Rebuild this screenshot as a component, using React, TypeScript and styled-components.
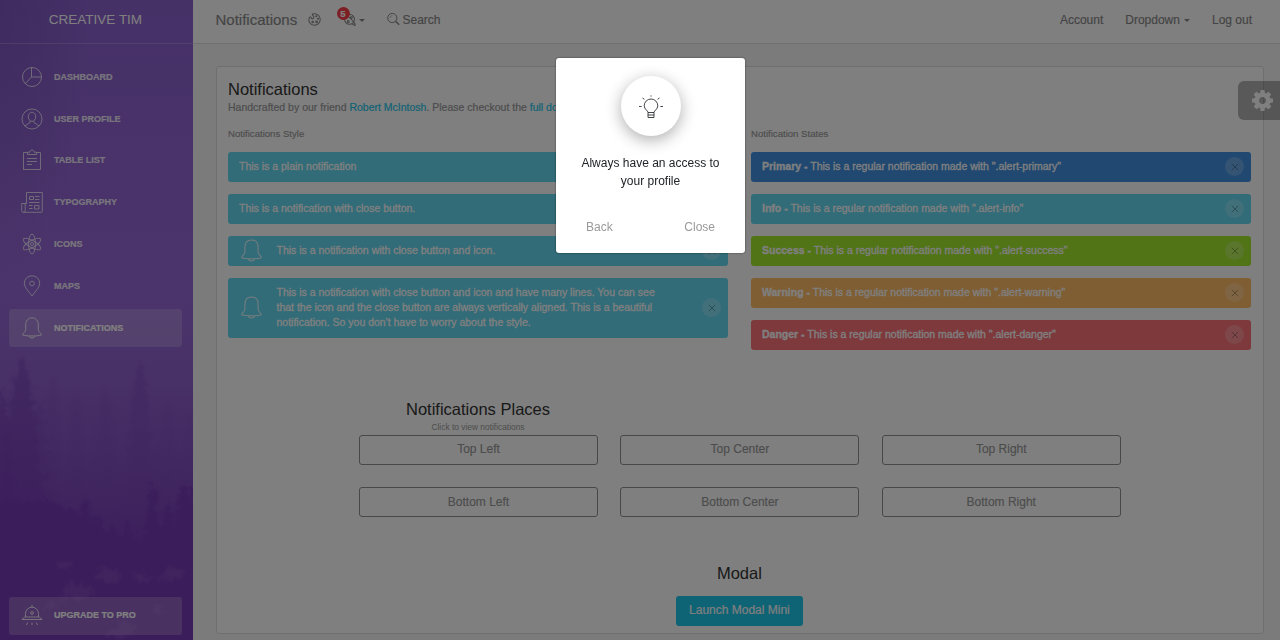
import React from "react";
import styled, { createGlobalStyle } from "styled-components";

const GlobalStyle = createGlobalStyle`
  * { box-sizing: border-box; }
  html, body { margin: 0; height: 100%; overflow: hidden; }
  body {
    font-family: "Liberation Sans", Arial, sans-serif;
    font-size: 12px;
    color: #333;
    background: #fff;
  }
  button { font: inherit; }
`;

const Page = styled.div`
  display: flex;
  width: 1280px;
  height: 640px;
  overflow: hidden;
`;

/* ---------- sidebar ---------- */

const Sidebar = styled.aside`
  position: relative;
  flex: 0 0 193px;
  display: flex;
  flex-direction: column;
  overflow: hidden;
  background: linear-gradient(180deg, #8c62cf 0%, #9769d7 45%, #9062ce 60%, #8450c2 74%, #783bb8 86%, #783bb8 100%);
`;

const Forest = styled.svg`
  position: absolute;
  inset: 0;
`;

const Brand = styled.div`
  position: relative;
  height: 44px;
  padding: 0 2px 5px 0;
  display: flex;
  align-items: center;
  justify-content: center;
  font-size: 13.5px;
  color: #fff;
  border-bottom: 1px solid rgba(255, 255, 255, 0.2);
`;

const Menu = styled.nav`
  position: relative;
  flex: 1;
  display: flex;
  flex-direction: column;
  gap: 3.8px;
  padding: 14px 11px 5px 9px;
`;

const MenuItem = styled.a<{ $active?: boolean; $bottom?: boolean }>`
  display: flex;
  align-items: center;
  gap: 11px;
  height: 38px;
  padding: 0 0 ${(p) => (p.$bottom ? 2 : 0.4)}px 12px;
  margin-top: ${(p) => (p.$bottom ? "auto" : "0")};
  border-radius: 3px;
  font-size: 9px;
  font-weight: 700;
  color: ${(p) => (p.$active || p.$bottom ? "#fff" : "rgba(255,255,255,0.86)")};
  background: ${(p) => (p.$active || p.$bottom ? "rgba(255,255,255,0.2)" : "transparent")};
  -webkit-text-stroke: 0.2px currentColor;
  svg { width: 22px; height: 22px; flex: none; opacity: 0.85; }
`;

/* ---------- main ---------- */

const Main = styled.main`
  flex: 1;
  display: flex;
  flex-direction: column;
  background: #f7f7f8;
`;

const Navbar = styled.header`
  height: 44px;
  padding: 0 28px 4px 22.5px;
  display: flex;
  align-items: center;
  background: #fff;
  border-bottom: 1px solid #dfdfdf;
  color: #888;
  -webkit-text-stroke: 0.15px currentColor;
`;

const NavTitle = styled.span`
  width: 92px;
  font-size: 15px;
`;

const NavBell = styled.span`
  position: relative;
  display: flex;
  align-items: center;
  gap: 3px;
  margin-left: 22px;
`;

const Badge = styled.span`
  position: absolute;
  left: -6px;
  top: -6px;
  width: 13px;
  height: 13px;
  border-radius: 50%;
  background: #fb404b;
  color: #fff;
  font-size: 9.5px;
  font-weight: 700;
  line-height: 13px;
  text-align: center;
`;

const Caret = styled.i`
  border: 3px solid transparent;
  border-top-color: currentColor;
  border-bottom: 0;
  margin-top: 2px;
`;

const NavSearch = styled.span`
  display: flex;
  align-items: center;
  gap: 3px;
  margin-left: 22px;
`;

const NavLinks = styled.div`
  margin-left: auto;
  display: flex;
  gap: 22px;
`;

const NavLink = styled.a`
  display: flex;
  align-items: center;
  gap: 4px;
`;

const Card = styled.section`
  width: 1048px;
  height: 568px;
  margin: 22px 0 0 23px;
  padding: 12px 11px 0;
  background: #fff;
  border: 1px solid #dfdfdf;
  border-radius: 3px;
`;

const Heading = styled.h4`
  margin: 0;
  font-size: 16.5px;
  font-weight: 400;
  line-height: 21px;
  color: #333;
`;

const SubTitle = styled.p`
  margin: 0;
  font-size: 10.5px;
  line-height: 15px;
  color: #9a9a9a;
  -webkit-text-stroke: 0.2px currentColor;
  a { color: #1dc7ea; }
`;

const Columns = styled.div`
  display: grid;
  grid-template-columns: 500px 500px;
  column-gap: 23px;
  margin-top: 12px;
`;

const Stack = styled.div`
  display: flex;
  flex-direction: column;
  gap: 12px;
`;

const Label = styled.h5`
  margin: 0 0 -1px;
  font-size: 9.6px;
  font-weight: 400;
  line-height: 14px;
  color: #9a9a9a;
  -webkit-text-stroke: 0.15px currentColor;
`;

const AlertBox = styled.div<{ $color: string; $tall?: boolean }>`
  display: flex;
  align-items: center;
  height: ${(p) => (p.$tall ? 60 : 30)}px;
  padding: 0 7px 1px 11px;
  border-radius: 3px;
  background: ${(p) => p.$color};
  color: #fff;
  font-size: 10.5px;
  line-height: 15px;
`;

const AlertIcon = styled.span`
  display: flex;
  width: 37.5px;
  padding-left: 0.5px;
  svg { width: 23px; height: 23px; opacity: 0.85; }
`;

const AlertText = styled.span`
  max-width: 392px;
  -webkit-text-stroke: 0.3px currentColor;
`;

const Dismiss = styled.button`
  margin-left: auto;
  width: 19px;
  height: 19px;
  padding: 0;
  display: flex;
  align-items: center;
  justify-content: center;
  border: 0;
  border-radius: 50%;
  background: rgba(255, 255, 255, 0.22);
  color: rgba(0, 0, 0, 0.34);
`;

const Places = styled.div`
  width: 762px;
  margin: 49px auto 0 131px;
  display: grid;
  grid-template-columns: repeat(3, 239px);
  column-gap: 22.4px;
  row-gap: 22px;
`;

const PlacesTitle = styled.div`
  grid-column: 1;
  margin-bottom: -22px;
  padding-right: 1px;
  text-align: center;
`;

const Hint = styled.p`
  margin: 0;
  font-size: 8.4px;
  line-height: 15px;
  color: #9a9a9a;
`;

const PlaceButton = styled.button<{ $row: number }>`
  grid-row: ${(p) => p.$row};
  height: 30px;
  padding: 0 0 ${(p) => (p.$row === 2 ? 2 : 0)}px 0;
  border: 1px solid #909090;
  border-radius: 3px;
  background: transparent;
  color: #999;
  -webkit-text-stroke: 0.15px currentColor;
`;

const ModalSection = styled.div`
  margin-top: 46px;
  padding-right: 1.2px;
  display: flex;
  flex-direction: column;
  align-items: center;
  gap: 12px;
`;

const LaunchButton = styled.button`
  width: 127px;
  height: 30px;
  padding: 0 0 2px;
  border: 0;
  border-radius: 3px;
  background: #1dc7ea;
  color: #fff;
  -webkit-text-stroke: 0.15px currentColor;
`;

/* ---------- layers over the page ---------- */

const SettingsTab = styled.div`
  position: fixed;
  right: 0;
  top: 81px;
  width: 42px;
  height: 39px;
  padding-left: 6px;
  display: flex;
  align-items: center;
  justify-content: center;
  border-radius: 6px 0 0 6px;
  background: rgba(0, 0, 0, 0.3);
`;

const Backdrop = styled.div`
  position: fixed;
  inset: 0;
  display: flex;
  align-items: flex-start;
  padding: 58px 0 0 556px;
  background: rgba(0, 0, 0, 0.5);
`;

const Dialog = styled.div`
  width: 189px;
  height: 195px;
  padding: 18px 17px 0;
  display: flex;
  flex-direction: column;
  align-items: center;
  border-radius: 3px;
  background: #fff;
  box-shadow: 0 0 2px rgba(0, 0, 0, 0.6);
  color: #212529;
`;

const Bulb = styled.div`
  width: 60px;
  height: 60px;
  padding-top: 2px;
  display: flex;
  align-items: center;
  justify-content: center;
  border-radius: 50%;
  background: #fff;
  box-shadow: 0 4px 16px rgba(0, 0, 0, 0.32);
`;

const DialogText = styled.p`
  width: 150px;
  margin: 18px 0 0;
  line-height: 18px;
  text-align: center;
`;

const DialogActions = styled.div`
  width: 100%;
  margin-top: 28px;
  padding: 0 13px;
  display: flex;
  justify-content: space-between;
  line-height: 18px;
  color: #999;
`;

/* ---------- icons ---------- */

type IconProps = { children: React.ReactNode; size?: number; box?: number; stroke?: number };

const Icon = ({ children, size = 22, box = 22, stroke = 1 }: IconProps) => (
  <svg
    width={size}
    height={size}
    viewBox={`0 0 ${box} ${box}`}
    fill="none"
    stroke="currentColor"
    strokeWidth={stroke}
    strokeLinejoin="round"
  >
    {children}
  </svg>
);

const PieIcon = () => (
  <Icon>
    <circle cx="11" cy="11" r="9.5" />
    <path d="M10.5 1.5V11H20.5M10.5 11L4.2 17.7" />
  </Icon>
);

const UserIcon = () => (
  <Icon>
    <circle cx="11" cy="11" r="10" />
    <ellipse cx="11" cy="8.8" rx="3.7" ry="4.6" />
    <path d="M9 12.7V14.6L4 17.8M13 12.7V14.6L18 17.8" />
  </Icon>
);

const ClipboardIcon = () => (
  <Icon>
    <path d="M6.5 3.5H2.5V20.5H19.5V3.5H15.5" />
    <path d="M6.5 5.5V3.2H8.8C9 .3 13 .3 13.2 3.2H15.5V5.5ZM6 9.5H16M6 12.5H16M6 15.5H11" />
  </Icon>
);

const PaperIcon = () => (
  <Icon>
    <path d="M5.5 12.5V1.5H21.3V20.5Q21.3 21.3 20.5 21.3H2.2Q.7 21.3.7 19.5V12.5H5.5M5.5 12.5H4.2V19.5Q4.2 21.3 2.4 21.3" />
    <path d="M8.5 5.5H12.5V8.5H8.5ZM14 5.5H18.5M14 8.5H18.5M8 11.5H18.5M8 14.5H11.5M8 17.5H11.5M13.5 14.5H18V18H13.5Z" />
  </Icon>
);

const AtomIcon = () => (
  <Icon>
    <circle cx="11" cy="11" r="1.5" />
    <ellipse cx="11" cy="11" rx="3.4" ry="10" />
    <ellipse cx="11" cy="11" rx="3.4" ry="10" transform="rotate(60 11 11)" />
    <ellipse cx="11" cy="11" rx="3.4" ry="10" transform="rotate(120 11 11)" />
  </Icon>
);

const PinIcon = () => (
  <Icon>
    <path d="M11 21C9 17.5 3.3 13 3.3 8.2A7.7 7.4 0 0 1 18.7 8.2C18.7 13 13 17.5 11 21Z" />
    <circle cx="11" cy="8.5" r="2.3" />
  </Icon>
);

const BellIcon = () => (
  <Icon>
    <path d="M11 .9C6.8.9 4.7 4 4.7 8V12.5C4.7 15.5 1.7 15.5 1.7 18C5 19.3 17 19.3 20.3 18C20.3 15.5 17.3 15.5 17.3 12.5V8C17.3 4 15.2.9 11 .9Z" />
    <path d="M8 18.9C8.4 21.7 13.6 21.7 14 18.9" />
  </Icon>
);

const LampIcon = () => (
  <Icon>
    <path d="M4.5 13V9.7A6.5 6.5 0 0 1 17.5 9.7V13M11 3V.8M3.5 13H18.5L21 15.5H1Z" />
    <circle cx="11" cy="9" r="1.4" />
    <path d="M6.8 18.5L5.3 21M11 18.5V21M15.2 18.5L16.7 21" />
  </Icon>
);

const PaletteIcon = () => (
  <Icon size={13} box={13} stroke={1.05}>
    <path d="M4.6.9C8 0 12 2 12.2 6C12.5 10 9.3 12.3 6 12.2C2.5 12 .6 9.2.9 6.2C1.2 3.6 2.6 3.4 3.2 4.8C3.8 6.6 6.2 6 5.8 4C5.4 2.6 3.4 2.2 4.6.9Z" />
    <circle cx="8.3" cy="3.3" r=".5" />
    <circle cx="10" cy="5.8" r=".5" />
    <circle cx="8.6" cy="8.8" r=".9" />
    <circle cx="4.6" cy="9" r=".7" />
  </Icon>
);

const PlanetIcon = () => (
  <Icon size={13} box={13} stroke={1.05}>
    <circle cx="6.5" cy="6.3" r="5" />
    <path d="M2.6 3.4C.2.4.7-.1 4 2.3C7 4.6 10 7.8 11.8 10.6C13 12.9 11.6 12.8 9.2 11.1" />
    <circle cx="8.4" cy="4.6" r=".9" />
    <circle cx="5.2" cy="8.4" r="1" />
  </Icon>
);

const SearchIcon = () => (
  <Icon size={13} box={13}>
    <circle cx="5.3" cy="5" r="4.6" />
    <path d="M8.5 8.2L12.2 11.8" strokeWidth="1.4" />
    <path d="M3 5A2.3 2.3 0 0 1 5.3 2.7" strokeWidth=".5" />
  </Icon>
);

const CrossIcon = () => (
  <Icon size={8} box={8} stroke={0.9}>
    <path d="M.8.8L7.2 7.2M7.2.8L.8 7.2" />
  </Icon>
);

const BulbIcon = () => (
  <Icon size={24} box={24} stroke={0.85}>
    <path d="M9 17.5C9 15.6 5.2 14.3 5.2 10.8A6.8 6.8 0 0 1 18.8 10.8C18.8 14.3 15 15.6 15 17.5Z" />
    <path d="M9 17.5V22.5H15V17.5M9 20H15M12 .4V1.6M3.5 3L5.4 4.3M20.5 3L18.6 4.3M0 11.5H2.6M21.4 11.5H24" />
  </Icon>
);

const GearIcon = () => (
  <svg width="21" height="21" viewBox="0 128 1536 1536" fill="#fff">
    <path d="M1024 896q0-106-75-181t-181-75-181 75-75 181 75 181 181 75 181-75 75-181zm512-109v222q0 12-8 23t-20 13l-185 28q-19 54-39 91 35 50 107 138 10 12 10 25t-9 23q-27 37-99 108t-94 71q-12 0-26-9l-138-108q-44 23-91 38-16 136-29 186-7 28-36 28h-222q-14 0-24.5-8.5t-11.5-21.5l-28-184q-49-16-90-37l-141 107q-10 9-25 9-14 0-25-11-126-114-165-168-7-10-7-23 0-12 8-23 15-21 51-66.5t54-70.5q-27-50-41-99l-183-27q-13-2-21-12.5t-8-23.5v-222q0-12 8-23t19-13l186-28q14-46 39-92-40-57-107-138-10-12-10-24 0-10 9-23 26-36 98.5-107.5t94.5-71.5q13 0 26 10l138 107q44-23 91-38 16-136 29-186 7-28 36-28h222q14 0 24.5 8.5t11.5 21.5l28 184q49 16 90 37l142-107q9-9 24-9 13 0 25 10 129 119 165 170 7 8 7 22 0 12-8 23-15 21-51 66.5t-54 70.5q26 50 41 98l183 28q13 2 21 12.5t8 23.5z" />
  </svg>
);

/* Builds the ragged outline of a conifer from its tip down to its base. */
const conifer = (x: number, top: number, bottom: number, half: number) => {
  const steps = Math.round((bottom - top) / 5);
  const left: string[] = [];
  const right: string[] = [];
  for (let i = 1; i <= steps; i++) {
    const y = top + ((bottom - top) * i) / steps;
    const wobble = 0.65 + 0.35 * Math.abs(Math.sin(i * 2.3 + x));
    const w = half * Math.pow(i / steps, 0.6) * wobble;
    left.push(`L${(x - w).toFixed(1)} ${y.toFixed(1)}L${(x - w * 0.6).toFixed(1)} ${(y - 1).toFixed(1)}`);
    right.unshift(`L${(x + w * 0.6).toFixed(1)} ${(y - 1).toFixed(1)}L${(x + w).toFixed(1)} ${y.toFixed(1)}`);
  }
  return `M${x} ${top}${left.join("")}${right.join("")}Z`;
};

const farTrees = [
  [53, 375, 520, 18],
  [76, 392, 540, 18],
  [105, 388, 540, 26],
  [168, 398, 560, 26],
  [190, 412, 560, 22],
];
const midTrees = [
  [140, 361, 600, 30],
  [40, 402, 540, 24],
];
const nearTrees = [
  [22, 357, 520, 34],
  [2, 388, 540, 22],
];
const shrubs = [
  [85, 498, 560, 18],
  [70, 506, 560, 18],
  [97, 514, 580, 18],
  [113, 525, 580, 20],
  [128, 522, 580, 16],
  [152, 482, 570, 14],
  [168, 498, 580, 16],
  [183, 480, 580, 18],
  [192, 484, 590, 14],
];

const ForestScene = () => (
  <Forest width="193" height="640" viewBox="0 0 193 640">
    <defs>
      <filter id="soft" x="-10%" y="-10%" width="120%" height="120%">
        <feGaussianBlur stdDeviation="2.2" />
      </filter>
      <filter id="edge">
        <feTurbulence type="fractalNoise" baseFrequency="0.2" numOctaves="3" seed="4" />
        <feDisplacementMap in="SourceGraphic" scale="14" xChannelSelector="R" yChannelSelector="G" />
        <feGaussianBlur stdDeviation="0.8" />
      </filter>
      <linearGradient id="trunk" gradientUnits="userSpaceOnUse" x1="0" y1="357" x2="0" y2="510">
        <stop offset="0" stopColor="#7c46ba" stopOpacity="0.6" />
        <stop offset="1" stopColor="#783cb8" stopOpacity="0.75" />
      </linearGradient>
      <linearGradient id="haze" gradientUnits="userSpaceOnUse" x1="0" y1="361" x2="0" y2="540">
        <stop offset="0" stopColor="#7c46ba" stopOpacity="0.45" />
        <stop offset="1" stopColor="#7c46ba" stopOpacity="0.2" />
      </linearGradient>
      <radialGradient id="shade" cx="0" cy="0" r="1">
        <stop offset="0" stopColor="#5d3c9c" stopOpacity="0.3" />
        <stop offset="1" stopColor="#5d3c9c" stopOpacity="0" />
      </radialGradient>
    </defs>
    <rect width="90" height="280" fill="url(#shade)" />
    <g filter="url(#soft)" fill="#7f4cbb" opacity="0.25">
      {farTrees.map(([x, t, b, w]) => <path key={x} d={conifer(x, t, b, w)} />)}
    </g>
    <g filter="url(#edge)" fill="url(#haze)">
      {midTrees.map(([x, t, b, w]) => <path key={x} d={conifer(x, t, b, w)} />)}
    </g>
    <g filter="url(#edge)" fill="url(#trunk)">
      {nearTrees.map(([x, t, b, w]) => <path key={x} d={conifer(x, t, b, w)} />)}
    </g>
    <g filter="url(#edge)" fill="#773ab7">
      {shrubs.map(([x, t, b, w]) => <path key={x} d={conifer(x, t, b, w)} />)}
      <path d="M-15 503L20 500L50 500L68 508L90 522L115 536L145 542L165 525L210 520V660H-15Z" />
    </g>
    <g filter="url(#edge)" fill="#a070cc" opacity="0.28">
      <path d="M94 576L103 568L118 571L123 580L108 583ZM55 564L67 561L72 567L61 569ZM132 575L144 572L150 582L138 582ZM158 580L171 567L184 570L180 577L164 580ZM60 592L72 583L92 588L94 594L78 602ZM43 606L66 597L58 607L43 611ZM104 638L121 621L138 625L132 634ZM152 604L162 607L161 616L154 612Z" />
    </g>
  </Forest>
);

/* ---------- content ---------- */

const menu: [string, () => React.ReactElement][] = [
  ["DASHBOARD", PieIcon],
  ["USER PROFILE", UserIcon],
  ["TABLE LIST", ClipboardIcon],
  ["TYPOGRAPHY", PaperIcon],
  ["ICONS", AtomIcon],
  ["MAPS", PinIcon],
  ["NOTIFICATIONS", BellIcon],
];

const INFO = "#63d8f1";

const states = [
  { name: "Primary", color: "#4091e2" },
  { name: "Info", color: INFO },
  { name: "Success", color: "#a1e82c" },
  { name: "Warning", color: "#ffbc67" },
  { name: "Danger", color: "#fc727a" },
];

type AlertProps = {
  color?: string;
  icon?: boolean;
  tall?: boolean;
  closable?: boolean;
  children: React.ReactNode;
};

const Alert = ({ color = INFO, icon, tall, closable = true, children }: AlertProps) => (
  <AlertBox $color={color} $tall={tall}>
    {icon && <AlertIcon><BellIcon /></AlertIcon>}
    <AlertText>{children}</AlertText>
    {closable && <Dismiss aria-label="Close"><CrossIcon /></Dismiss>}
  </AlertBox>
);

export default function App() {
  return (
    <>
      <GlobalStyle />
      <Page>
        <Sidebar>
          <ForestScene />
          <Brand>CREATIVE TIM</Brand>
          <Menu>
            {menu.map(([name, Glyph]) => (
              <MenuItem key={name} $active={name === "NOTIFICATIONS"}>
                <Glyph />
                {name}
              </MenuItem>
            ))}
            <MenuItem $bottom>
              <LampIcon />
              UPGRADE TO PRO
            </MenuItem>
          </Menu>
        </Sidebar>
        <Main>
          <Navbar>
            <NavTitle>Notifications</NavTitle>
            <PaletteIcon />
            <NavBell>
              <PlanetIcon />
              <Badge>5</Badge>
              <Caret />
            </NavBell>
            <NavSearch>
              <SearchIcon />
              Search
            </NavSearch>
            <NavLinks>
              <NavLink>Account</NavLink>
              <NavLink>Dropdown <Caret /></NavLink>
              <NavLink>Log out</NavLink>
            </NavLinks>
          </Navbar>
          <Card>
            <Heading>Notifications</Heading>
            <SubTitle>
              Handcrafted by our friend <a>Robert McIntosh</a>. Please checkout the <a>full documentation.</a>
            </SubTitle>
            <Columns>
              <Stack>
                <Label>Notifications Style</Label>
                <Alert closable={false}>This is a plain notification</Alert>
                <Alert>This is a notification with close button.</Alert>
                <Alert icon>This is a notification with close button and icon.</Alert>
                <Alert icon tall>
                  This is a notification with close button and icon and have many lines. You can see that the icon and
                  the close button are always vertically aligned. This is a beautiful notification. So you don't have to
                  worry about the style.
                </Alert>
              </Stack>
              <Stack>
                <Label>Notification States</Label>
                {states.map(({ name, color }) => (
                  <Alert key={name} color={color}>
                    <b>{name} -</b> This is a regular notification made with ".alert-{name.toLowerCase()}"
                  </Alert>
                ))}
              </Stack>
            </Columns>
            <Places>
              <PlacesTitle>
                <Heading>Notifications Places</Heading>
                <Hint>Click to view notifications</Hint>
              </PlacesTitle>
              <PlaceButton $row={2}>Top Left</PlaceButton>
              <PlaceButton $row={2}>Top Center</PlaceButton>
              <PlaceButton $row={2}>Top Right</PlaceButton>
              <PlaceButton $row={3}>Bottom Left</PlaceButton>
              <PlaceButton $row={3}>Bottom Center</PlaceButton>
              <PlaceButton $row={3}>Bottom Right</PlaceButton>
            </Places>
            <ModalSection>
              <Heading>Modal</Heading>
              <LaunchButton>Launch Modal Mini</LaunchButton>
            </ModalSection>
          </Card>
        </Main>
      </Page>
      <SettingsTab><GearIcon /></SettingsTab>
      <Backdrop>
        <Dialog role="dialog">
          <Bulb><BulbIcon /></Bulb>
          <DialogText>Always have an access to your profile</DialogText>
          <DialogActions>
            <span>Back</span>
            <span>Close</span>
          </DialogActions>
        </Dialog>
      </Backdrop>
    </>
  );
}
